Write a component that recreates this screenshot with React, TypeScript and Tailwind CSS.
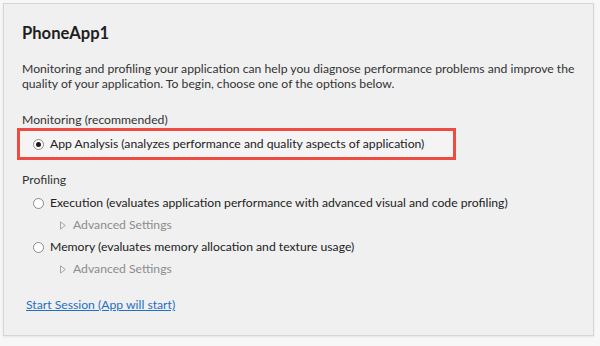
// Performance session launcher panel
const Radio = ({ checked = false }: { checked?: boolean }) => {
  return (
    <span className="flex h-[11px] w-[11px] shrink-0 items-center justify-center rounded-full border border-[#8a8a8a] bg-white">
      {checked && <span className="h-[5px] w-[5px] rounded-full bg-[#1a1a1a]" />}
    </span>
  );
};

const AdvancedSettings = () => {
  return (
    <div className="flex h-[22px] items-center pl-[38px] text-[#8c8c8c]">
      <svg width="6" height="9" viewBox="0 0 6 9" className="mr-[7px]">
        <path d="M0.5 0.8 L5.2 4.5 L0.5 8.2 Z" fill="none" stroke="#a6a6a6" strokeWidth="1" />
      </svg>
      <span>Advanced Settings</span>
    </div>
  );
};

const App = () => {
  return (
    <div
      className="h-[346px] w-[600px] bg-[#f7f7f7] pl-[3px] pt-[3px] text-[12.2px] text-[#333333]"
      style={{ fontFamily: "Lato, 'Liberation Sans', sans-serif" }}
    >
      <div className="h-[333px] w-[591px] border border-[#d6d6d6] bg-[#f0f0f0] pl-[18px] pt-[19px] shadow-[0_1px_2px_rgba(0,0,0,0.08)]">
        {/* Title */}
        <h1 className="text-[16.6px] font-bold leading-[20px] text-[#1e1e1e]">PhoneApp1</h1>

        {/* Intro */}
        <p className="mt-[18px] w-[565px] leading-[15px]">
          Monitoring and profiling your application can help you diagnose performance problems and improve the
          quality of your application. To begin, choose one of the options below.
        </p>

        {/* Monitoring */}
        <div className="mt-[21px] leading-[16px]">Monitoring (recommended)</div>
        <div className="-ml-[5px] flex h-[32px] w-[439px] items-center border-[3px] border-[#ee4b43] bg-[#f4f4f4] pl-[13px]">
          <Radio checked />
          <span className="ml-[6px] text-[#222222]">
            App Analysis (analyzes performance and quality aspects of application)
          </span>
        </div>

        {/* Profiling */}
        <div className="mt-[12px] leading-[16px]">Profiling</div>
        <div className="mt-[4px]">
          <div className="flex h-[22px] items-center pl-[11px]">
            <Radio />
            <span className="ml-[6px] text-[#222222]">
              Execution (evaluates application performance with advanced visual and code profiling)
            </span>
          </div>
          <AdvancedSettings />
          <div className="flex h-[22px] items-center pl-[11px]">
            <Radio />
            <span className="ml-[6px] text-[#222222]">
              Memory (evaluates memory allocation and texture usage)
            </span>
          </div>
          <AdvancedSettings />
        </div>

        {/* Start */}
        <a href="#" className="ml-[4px] mt-[17px] inline-block leading-[16px] text-[#1f6fc5] underline">
          Start Session (App will start)
        </a>
      </div>
    </div>
  );
};

export default App;
